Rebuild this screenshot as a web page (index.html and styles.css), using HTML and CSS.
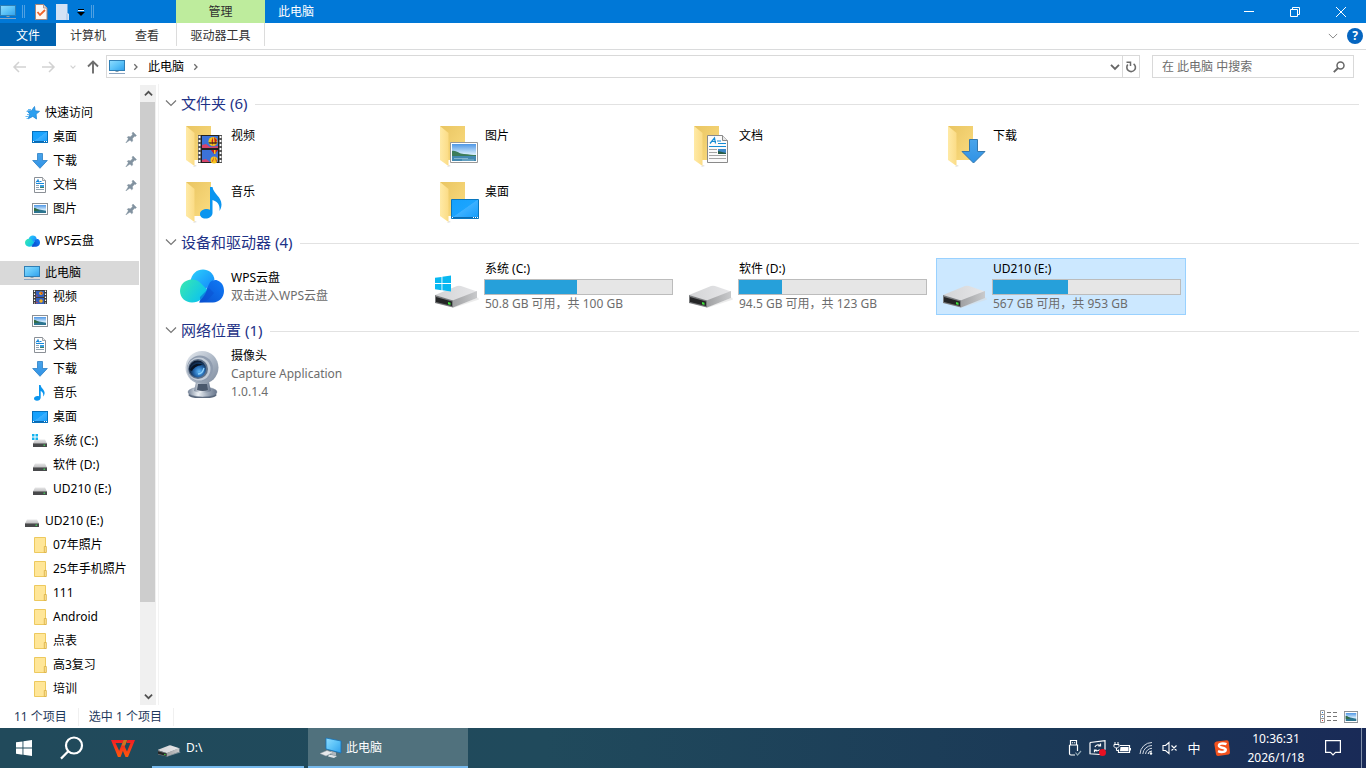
FILE: index.html
```html
<!DOCTYPE html>
<html lang="zh-CN">
<head>
<meta charset="utf-8">
<meta name="viewport" content="width=device-width, initial-scale=1">
<title>此电脑</title>
<link rel="stylesheet" href="styles.css">
</head>
<body>
<svg class="defs" width="0" height="0" aria-hidden="true">
  <defs>
    <linearGradient id="g-screen" x1="0" y1="0" x2="1" y2="1"><stop offset="0" stop-color="#8fdcff"/><stop offset=".5" stop-color="#5cc3f8"/><stop offset="1" stop-color="#2f9fec"/></linearGradient>
    <linearGradient id="g-desk" x1="0" y1="0" x2="1" y2="1"><stop offset="0" stop-color="#14a0fc"/><stop offset=".48" stop-color="#1ba4fe"/><stop offset=".5" stop-color="#3cb0ff"/><stop offset="1" stop-color="#119bfb"/></linearGradient>
    <linearGradient id="g-back" x1="0" y1="0" x2="1" y2="1"><stop offset="0" stop-color="#e9c562"/><stop offset="1" stop-color="#fbdc80"/></linearGradient>
    <linearGradient id="g-flap" x1="0" y1="0" x2="1" y2="0"><stop offset="0" stop-color="#ffeaa6"/><stop offset="1" stop-color="#fbdc86"/></linearGradient>
    <linearGradient id="g-sky" x1="0" y1="0" x2="0" y2="1"><stop offset="0" stop-color="#4f97e6"/><stop offset=".6" stop-color="#d5ecfb"/><stop offset="1" stop-color="#cfe4ee"/></linearGradient>
    <linearGradient id="g-arrow" x1="0" y1="0" x2="0" y2="1"><stop offset="0" stop-color="#49a4ea"/><stop offset="1" stop-color="#2f92e6"/></linearGradient>
    <linearGradient id="g-dtop" x1="0" y1="0" x2="1" y2="0"><stop offset="0" stop-color="#d3d4d6"/><stop offset="1" stop-color="#e6e6e8"/></linearGradient>
    <linearGradient id="g-dside" x1="0" y1="0" x2="1" y2="0"><stop offset="0" stop-color="#9fa0a2"/><stop offset="1" stop-color="#c9cacc"/></linearGradient>
    <linearGradient id="g-c1" x1="0" y1="0" x2="1" y2="1"><stop offset="0" stop-color="#2cd2fb"/><stop offset="1" stop-color="#1180fb"/></linearGradient>
    <linearGradient id="g-c2" x1="0" y1=".2" x2="1" y2=".8"><stop offset="0" stop-color="#35e6b4"/><stop offset="1" stop-color="#08bff5"/></linearGradient>
    <linearGradient id="g-c3" x1="0" y1="1" x2="1" y2="0"><stop offset="0" stop-color="#0a51d0"/><stop offset="1" stop-color="#107cf7"/></linearGradient>
    <linearGradient id="g-metal" x1="0" y1="0" x2="1" y2="1"><stop offset="0" stop-color="#e8ecf1"/><stop offset=".55" stop-color="#aab5c4"/><stop offset="1" stop-color="#7d8a9c"/></linearGradient>
    <radialGradient id="g-lens" cx=".6" cy=".65" r=".6"><stop offset="0" stop-color="#5cb8fa"/><stop offset=".5" stop-color="#2568ae"/><stop offset="1" stop-color="#0c1c34"/></radialGradient>
    <linearGradient id="g-base" x1="0" y1="0" x2="1" y2="0"><stop offset="0" stop-color="#78869a"/><stop offset=".35" stop-color="#edf1f5"/><stop offset=".7" stop-color="#9aa6b6"/><stop offset="1" stop-color="#66748a"/></linearGradient>
    <linearGradient id="g-wps" x1="0" y1="0" x2="0" y2="17" gradientUnits="userSpaceOnUse"><stop offset="0" stop-color="#f31c24"/><stop offset="1" stop-color="#ff5a0a"/></linearGradient>
    <linearGradient id="g-mini" x1="0" y1="0" x2="0" y2="1"><stop offset="0" stop-color="#e7e7e8"/><stop offset="1" stop-color="#bdbdbf"/></linearGradient>
  </defs>

  <symbol id="i-pc" viewBox="0 0 16 16"><rect x=".5" y="1.500" width="15" height="10" fill="url(#g-screen)" stroke="#2f7fb5"/><path d="M6.500 12h3v1h-3z" fill="#8aa0b0"/><path d="M0 14.500h16" stroke="#8ba4c0"/></symbol>
  <symbol id="i-star" viewBox="0 0 16 16"><path d="M10.500 1.500l.7 4.300 4.300.6-3.400 2.700.4 4.900-3.700-2.600-4.600 2.400 1.600-4.800-2.600-3.100 4.300-.2z" fill="#2b9ff0" stroke="#1f86d6" stroke-width=".8"/><path d="M4 4.500h3M2.500 6.500h2M3 9.500h2M1.500 11.500h3M2.500 13.500h2" stroke="#56b3f2" stroke-width=".9"/></symbol>
  <symbol id="i-desk" viewBox="0 0 16 16"><rect x=".5" y="2.500" width="15" height="11" fill="url(#g-desk)" stroke="#0671bd"/><path d="M1 12.500h14" stroke="#0a67b0"/><path d="M1 12.500h1M12 12.500h1M14 12.500h1" stroke="#fff"/></symbol>
  <symbol id="i-down" viewBox="0 0 16 16"><path d="M5.500.5h5v7h4.800L8 15.300.7 7.500h4.800z" fill="url(#g-arrow)" stroke="#2b7fc4" stroke-width=".8"/></symbol>
  <symbol id="i-doc" viewBox="0 0 16 16"><path d="M2.500.5h8l3 3v12h-11z" fill="#fff" stroke="#8b9096"/><path d="M10.500.5v3h3" fill="#eee" stroke="#8b9096" stroke-width=".8"/><path d="M4 5.500L6 2.500l1 3M4.500 4.500h3M8 4.500h1.500M4 6.500h8" stroke="#1687d9" fill="none"/><path d="M4 8.500h3M4 10.500h3M4 12.500h8" stroke="#8ea3b3"/><path d="M8 8h4v3H8z" fill="#3b9fe0"/><path d="M8 10h4v1H8z" fill="#3d7d66"/></symbol>
  <symbol id="i-pic" viewBox="0 0 16 16"><rect x=".5" y="2.500" width="15" height="11" fill="#fff" stroke="#8b9096"/><path d="M2 4h12v8H2z" fill="url(#g-sky)"/><path d="M2 7l4 1.200 8 1.600V12H2z" fill="#2d7590"/><path d="M2 6.800c2 .4 4 2 6 2.600l-6 .6z" fill="#346d43"/></symbol>
  <symbol id="i-film" viewBox="0 0 16 16"><path d="M1 1h14v14H1z" fill="#3c3c3c"/><path d="M4 2h8v6H4zM4 9h8v6H4z" fill="#335fbe"/><circle cx="9" cy="4.300" r="1.800" fill="#f2b31b"/><path d="M8 3.500l2 2 .5-2z" fill="#cc2a1b"/><path d="M4 6l2.500 1L4 7.800M4 12.500l2.500 1L4 14.500z" fill="#b44866"/><circle cx="9" cy="12" r="1.800" fill="#efb224"/><path d="M2.500 1.500v13M13.500 1.500v13" stroke="#fff" stroke-dasharray="1.500 1.500" stroke-width="1.200"/></symbol>
  <symbol id="i-note" viewBox="0 0 16 16"><path d="M7 0h1.600c.2 3 4 4.600 4 7.800 0 1.500-.5 2.700-1.400 3.700.5-3-.6-4.500-2.500-5.500v6.500c0 2-1.700 3.300-3.700 3.300S2 14.900 2 13.600C2 12 3.700 11 5.400 11c.6 0 1.100.1 1.600.3z" fill="#0a95ee"/></symbol>
  <symbol id="i-drive" viewBox="0 0 16 16"><path d="M3 6.500h10L15 10.500H1z" fill="url(#g-mini)"/><path d="M1 10.300h14v3.700H1z" fill="#48494b"/><path d="M1 10.500h14" stroke="#888" stroke-width=".6"/><path d="M11.500 11.600h1.600v1.200h-1.600z" fill="#44df5c"/></symbol>
  <symbol id="i-drivec" viewBox="0 0 16 16"><use href="#i-drive"/><path d="M0 1h2.500v2.500H0zM3.500 1H6v2.500H3.500zM0 4.500h2.500V7H0zM3.500 4.500H6V7H3.500z" fill="#14b3ef"/></symbol>
  <symbol id="i-folder" viewBox="0 0 16 16"><path d="M2.500.5h11v15h-11z" fill="#ffe698" stroke="#edc95e"/><path d="M12.300 9.500h2v6h-2z" fill="#ffe698" stroke="#dcb34a" stroke-width=".9"/></symbol>
  <symbol id="i-cloud" viewBox="0 0 44 34"><path d="M10 13C12 4 17 .5 23 .5c5.500 0 10.500 3.500 11.500 10L22 24z" fill="url(#g-c1)"/><path d="M19 33.500l11-20.300c2-2 5-2.900 7.500-1.800C42 13 44 17 44 22c0 6.500-5 11.500-11 11.500z" fill="url(#g-c3)"/><path d="M12 10.500c4 0 6.500 1.500 9 4l6 6c-3 9-8 13-15 13C5 33.500 0 28.500 0 22s5-11.500 12-11.500z" fill="url(#g-c2)"/><path d="M20 33.500c4 0 6-1 8.500-3.500L34 24l-5-5-9 9z" fill="#0a50d2" opacity=".5"/></symbol>
  <symbol id="i-pin" viewBox="0 0 12 12"><path d="M8 1l3.500 3.500-1 1-1-.2-2 2.200.2 2.500-1 .8L2.200 6.500l.8-1 2.500.2 2-2-.4-1.500zM3.500 7.500l1.500 1.500L.8 12z" fill="#8292a0" stroke="#8292a0" stroke-width=".4"/></symbol>
  <symbol id="i-chev" viewBox="0 0 12 12"><path d="M1 3.500l5 5 5-5" fill="none" stroke="currentColor" stroke-width="1.200"/></symbol>
  <symbol id="i-bold-chev" viewBox="0 0 8 8"><path d="M.8 2.300L4 5.500l3.200-3.200" fill="none" stroke="currentColor" stroke-width="1.500"/></symbol>
  <symbol id="i-crumb" viewBox="0 0 8 8"><path d="M2.300 1.300L5 4 2.300 6.700" fill="none" stroke="#6b6b6b" stroke-width="1.300"/></symbol>
  <symbol id="i-arrow" viewBox="0 0 14 12"><path d="M7 1L2 6l5 5M2 6h12" fill="none" stroke="currentColor" stroke-width="1.500"/></symbol>

  <symbol id="b-folder" viewBox="0 0 48 48"><path d="M15 42l-2 2 4-1z" fill="#ddd"/><path d="M6 3h25v34H14z" fill="url(#g-back)"/><path d="M6 3l8.500 7v33L6 37z" fill="url(#g-flap)"/></symbol>
  <symbol id="b-pc" viewBox="0 0 22 22"><path d="M6 1l15 3v12L6 12z" fill="url(#g-screen)" stroke="#1572b8" stroke-width=".8"/><path d="M11 14l5 1.500v3l-5-1z" fill="#aeb6bd"/><path d="M9 17.500l8 1.500-3 2-6-1.500z" fill="#dfe3e6"/><path d="M0 16.500l7-3 6 2-7 3.500z" fill="#e8eaec" stroke="#9ba2a8" stroke-width=".5"/></symbol>
  <symbol id="b-drive" viewBox="0 0 48 48"><path d="M18 44.500l26-10 1 2-26 8.500z" fill="#d9d9d9" opacity=".5"/><path d="M1 32l22-9q2-.6 4 0l16 5.500L19 38z" fill="url(#g-dtop)"/><path d="M18.500 37.500L43 28v7L19 44.500z" fill="url(#g-dside)"/><path d="M1 32l18 5.500v7L1 40z" fill="#77797b"/><path d="M2 34l16 4.600v4.500L2 39z" fill="#242526"/><path d="M14 39l2.500.7v2.200l-2.500-.6z" fill="#3ee23a"/></symbol>
  <symbol id="b-win" viewBox="0 0 16 16"><path d="M0 2.300L6.500 1.400v6.200H0zM7.400 1.300L16 0v7.600H7.400zM0 8.500h6.500v6.200L0 13.800zM7.400 8.500H16V16l-8.600-1.200z" fill="currentColor"/></symbol>
</svg>

<div class="window">
  <header class="titlebar">
    <div class="quick">
      <svg class="ic16"><use href="#i-pc"/></svg>
      <span class="bar"></span>
      <button class="plain" aria-label="属性"><svg width="13" height="16" viewBox="0 0 13 16"><path d="M.5.500h8l3.500 3.500v11.500H.5z" fill="#fdf8f4" stroke="#a9877a"/><path d="M8.500.5V4H12" fill="#ddd" stroke="#a9877a" stroke-width=".8"/><path d="M2.500 8l2.500 3L10 6" fill="none" stroke="#f0642a" stroke-width="1.800"/></svg></button>
      <button class="plain" aria-label="新建文件夹"><svg width="13" height="16" viewBox="0 0 13 16"><path d="M0 0h11.500v9L13 10v6H0z" fill="#d3e2f5"/><path d="M11 9.500V16" stroke="#9ebfe6"/></svg></button>
      <button class="plain caret" aria-label="自定义快速访问工具栏"><svg width="8" height="8" viewBox="0 0 8 8"><path d="M1 1.500h6" stroke="#000"/><path d="M1 2.500h6" stroke="#dceeff"/><path d="M0 4h8L4 8z" fill="#000"/></svg></button>
      <span class="bar"></span>
    </div>
    <div class="context">管理</div>
    <h1 class="caption">此电脑</h1>
    <div class="winbtns">
      <button aria-label="最小化"><svg width="10" height="10"><path d="M0 4.500h10" stroke="#fff"/></svg></button>
      <button aria-label="还原"><svg width="10" height="10" fill="none" stroke="#fff"><path d="M.5 2.500h7v7h-7zM2.500 2.500v-2h7v7h-2"/></svg></button>
      <button aria-label="关闭"><svg width="10" height="10" stroke="#fff"><path d="M0 0l10 10M10 0L0 10"/></svg></button>
    </div>
  </header>

  <div class="ribbon">
    <button class="file">文件</button>
    <button class="tab-pc">计算机</button>
    <button class="tab-view">查看</button>
    <button class="tab-tools">驱动器工具</button>
    <div class="ribbon-end">
      <button class="plain" aria-label="展开功能区"><svg class="ic10 lightgray"><use href="#i-chev"/></svg></button>
      <button class="help" aria-label="帮助">?</button>
    </div>
  </div>

  <div class="address-row">
    <div class="history">
      <button class="plain off" aria-label="后退"><svg width="14" height="12"><use href="#i-arrow"/></svg></button>
      <button class="plain off forward" aria-label="前进"><svg width="14" height="12"><use href="#i-arrow"/></svg></button>
      <button class="plain off" aria-label="最近浏览的位置"><svg width="6" height="6"><use href="#i-bold-chev"/></svg></button>
      <button class="plain up" aria-label="上移"><svg width="12" height="14" viewBox="0 0 12 14"><path d="M1 6.500L6 1.500l5 5M6 2v11.500" fill="none" stroke="#6e6e6e" stroke-width="1.900"/></svg></button>
    </div>
    <div class="address">
      <svg class="ic16"><use href="#i-pc"/></svg>
      <svg width="8" height="8"><use href="#i-crumb"/></svg>
      <a href="#">此电脑</a>
      <svg width="8" height="8"><use href="#i-crumb"/></svg>
      <button class="plain drop" aria-label="以前的位置"><svg width="10" height="10"><use href="#i-bold-chev"/></svg></button>
      <button class="plain refresh" aria-label="刷新"><svg width="12" height="12" viewBox="0 0 12 12"><path d="M8.600 2.800A4.300 4.300 0 1 1 2.800 3.600" fill="none" stroke="#6b6b6b" stroke-width="1.600"/><path d="M1.500 1.200h4v3.800" fill="none" stroke="#6b6b6b" stroke-width="1.500"/></svg></button>
    </div>
    <label class="search">
      <input type="text" placeholder="在 此电脑 中搜索" aria-label="在 此电脑 中搜索">
      <svg width="12" height="12" viewBox="0 0 12 12"><circle cx="7.500" cy="4.500" r="3.500" fill="none" stroke="#666" stroke-width="1.500"/><path d="M5 7L.8 11.200" stroke="#666" stroke-width="1.900"/></svg>
    </label>
  </div>

  <div class="body">
    <nav class="sidebar">
      <div class="tree">
        <section>
          <a href="#"><svg><use href="#i-star"/></svg>快速访问</a>
          <a class="sub" href="#"><svg><use href="#i-desk"/></svg>桌面<svg class="pin"><use href="#i-pin"/></svg></a>
          <a class="sub" href="#"><svg><use href="#i-down"/></svg>下载<svg class="pin"><use href="#i-pin"/></svg></a>
          <a class="sub" href="#"><svg><use href="#i-doc"/></svg>文档<svg class="pin"><use href="#i-pin"/></svg></a>
          <a class="sub" href="#"><svg><use href="#i-pic"/></svg>图片<svg class="pin"><use href="#i-pin"/></svg></a>
        </section>
        <section>
          <a href="#"><svg><use href="#i-cloud" x="1" width="15" height="16"/></svg>WPS云盘</a>
        </section>
        <section>
          <a class="current" href="#"><svg><use href="#i-pc"/></svg>此电脑</a>
          <a class="sub" href="#"><svg><use href="#i-film"/></svg>视频</a>
          <a class="sub" href="#"><svg><use href="#i-pic"/></svg>图片</a>
          <a class="sub" href="#"><svg><use href="#i-doc"/></svg>文档</a>
          <a class="sub" href="#"><svg><use href="#i-down"/></svg>下载</a>
          <a class="sub" href="#"><svg><use href="#i-note"/></svg>音乐</a>
          <a class="sub" href="#"><svg><use href="#i-desk"/></svg>桌面</a>
          <a class="sub" href="#"><svg><use href="#i-drivec"/></svg>系统 (C:)</a>
          <a class="sub" href="#"><svg><use href="#i-drive"/></svg>软件 (D:)</a>
          <a class="sub" href="#"><svg><use href="#i-drive"/></svg>UD210 (E:)</a>
        </section>
        <section>
          <a href="#"><svg><use href="#i-drive"/></svg>UD210 (E:)</a>
          <a class="sub" href="#"><svg><use href="#i-folder"/></svg>07年照片</a>
          <a class="sub" href="#"><svg><use href="#i-folder"/></svg>25年手机照片</a>
          <a class="sub" href="#"><svg><use href="#i-folder"/></svg>111</a>
          <a class="sub" href="#"><svg><use href="#i-folder"/></svg>Android</a>
          <a class="sub" href="#"><svg><use href="#i-folder"/></svg>点表</a>
          <a class="sub" href="#"><svg><use href="#i-folder"/></svg>高3复习</a>
          <a class="sub" href="#"><svg><use href="#i-folder"/></svg>培训</a>
        </section>
      </div>
      <div class="scroll">
        <button class="plain flip" aria-label="向上滚动"><svg width="9" height="9"><use href="#i-bold-chev"/></svg></button>
        <div class="track"><div class="thumb"></div></div>
        <button class="plain" aria-label="向下滚动"><svg width="9" height="9"><use href="#i-bold-chev"/></svg></button>
      </div>
    </nav>

    <main class="content">
      <section>
        <h2><svg width="12" height="12"><use href="#i-chev"/></svg>文件夹 (6)</h2>
        <div class="tiles folders">
          <a href="#"><svg viewBox="0 0 48 48"><use href="#b-folder"/><path d="M18 12h24v28H18z" fill="#555"/><path d="M21 12h18v28H21z" fill="#222"/><path d="M22 13h16v12H22zM22 27h16v12H22z" fill="#3b72d8"/><path d="M22 22l4-1 4 3 8-1v2H22zM22 37l4-1 4 3h-8z" fill="#d5446b"/><circle cx="33" cy="18.500" r="4.500" fill="#f3c41d"/><path d="M33 14l-1.500 4 1.500 5zM34 14l3 3-2 5z" fill="#c5221f"/><path d="M28.500 19h9l-1 2h-7z" fill="#3a2a18" opacity=".7"/><path d="M31 27h7l-3.500 4.500z" fill="#c5221f"/><path d="M34 27h1.500v4H34z" fill="#f3c41d"/><circle cx="34" cy="37" r="3.500" fill="#f3c41d"/><path d="M34 33.500l-2 5h1zM35 33.500l2 5h-1z" fill="#c5221f"/><path d="M19.500 13v27M40.500 13v27" stroke="#fff" stroke-width="1.800" stroke-dasharray="2 2"/></svg><span>视频</span></a>
          <a href="#"><svg viewBox="0 0 48 48"><use href="#b-folder"/><path d="M16.500 19.500h27v20h-27z" fill="#fff" stroke="#989898"/><path d="M18 21h24v17H18z" fill="url(#g-sky)"/><path d="M18 28c4-1 7 3 12 3 5 .5 9 1 12 1v2H18z" fill="#3c7c59"/><path d="M18 33h24v5H18z" fill="#4389b0"/><path d="M20 35.500h14M28 37h12" stroke="#9fc9de" stroke-width=".7"/></svg><span>图片</span></a>
          <a href="#"><svg viewBox="0 0 48 48"><use href="#b-folder"/><path d="M19.500 12.500h15l5 5v22h-20z" fill="#fbfbfb" stroke="#8a8a8a"/><path d="M34.500 12.500v5h5" fill="#e8e8e8" stroke="#8a8a8a"/><path d="M22 20.500l4.500-5.500 1 5.500M23.500 18.500h4.500M29 18h4M30 20.500h8M21 23.500h17" fill="none" stroke="#158bd4" stroke-width="1.200"/><path d="M21 26.500h8M21 29.500h8M21 32.500h17M21 35.500h17" stroke="#a5a5a5"/><path d="M30 26h8v5h-8z" fill="#3d87c8"/><path d="M30 28l8 2v1h-8z" fill="#285c45"/></svg><span>文档</span></a>
          <a href="#"><svg viewBox="0 0 48 48"><use href="#b-folder"/><path d="M27.500 16.500h8v12H43L31.500 40 20 28.500h7.500z" fill="url(#g-arrow)" stroke="#3578ad"/></svg><span>下载</span></a>
          <a href="#"><svg viewBox="0 0 48 48"><use href="#b-folder"/><path d="M30 8h2.500c1 7 9 9.500 9 17.500 0 2.500-.8 4.500-2 6.500.8-6-2-9.500-7-11v13c0 3.500-3.500 5.500-7 5.500s-5.500-2-5.500-4.500c0-3.500 3.500-5 7-5 1 0 2 .2 3 .7z" fill="#0b95ef"/></svg><span>音乐</span></a>
          <a href="#"><svg viewBox="0 0 48 48"><use href="#b-folder"/><path d="M17.500 20.500h27v19h-27z" fill="url(#g-desk)" stroke="#0876bf"/><path d="M18 38.500h26" stroke="#0b6cb2"/><path d="M18 38.500h1M39 38.500h1M41 38.500h1M43 38.500h1" stroke="#fff"/></svg><span>桌面</span></a>
        </div>
      </section>
      <section class="drives">
        <h2><svg width="12" height="12"><use href="#i-chev"/></svg>设备和驱动器 (4)</h2>
        <div class="tiles">
          <a href="#"><svg viewBox="0 0 48 48"><use href="#i-cloud" y="6" width="44" height="34"/></svg><span>WPS云盘<small>双击进入WPS云盘</small></span></a>
          <a href="#"><svg viewBox="0 0 48 48"><use href="#b-drive"/><use class="cyan" href="#b-win" x="1" y="12" width="16" height="17"/></svg><span>系统 (C:)<i class="meter"><i style="width:49%"></i></i><small>50.8 GB 可用，共 100 GB</small></span></a>
          <a href="#"><svg viewBox="0 0 48 48"><use href="#b-drive"/></svg><span>软件 (D:)<i class="meter"><i style="width:23%"></i></i><small>94.5 GB 可用，共 123 GB</small></span></a>
          <a class="selected" href="#"><svg viewBox="0 0 48 48"><use href="#b-drive"/></svg><span>UD210 (E:)<i class="meter"><i style="width:40%"></i></i><small>567 GB 可用，共 953 GB</small></span></a>
        </div>
      </section>
      <section>
        <h2><svg width="12" height="12"><use href="#i-chev"/></svg>网络位置 (1)</h2>
        <div class="tiles">
          <a href="#"><svg viewBox="0 0 48 48"><ellipse cx="22.500" cy="45" rx="14" ry="3.500" fill="#59677b"/><ellipse cx="22.500" cy="42" rx="14.500" ry="5" fill="url(#g-base)" stroke="#78869a" stroke-width=".5"/><path d="M16 32h13l2 9q-8 4-17 0z" fill="url(#g-base)"/><path d="M18 34h9l1 6q-5 2-11 0z" fill="#4a586c"/><circle cx="22" cy="17.500" r="16.500" fill="url(#g-metal)"/><circle cx="20" cy="18.500" r="13" fill="#8f9caf"/><circle cx="19" cy="19" r="11.500" fill="#c3ccd7"/><circle cx="18" cy="19" r="10" fill="#5d7089"/><circle cx="17.500" cy="19" r="8.500" fill="url(#g-lens)"/><path d="M10 20c2-5 7-8 13-5-4 0-9 2-11 6z" fill="#071222"/><path d="M18 24c3 0 5-2 6-6" stroke="#8dd3ff" stroke-width="1.300" fill="none"/></svg><span>摄像头<small>Capture Application</small><small>1.0.1.4</small></span></a>
        </div>
      </section>
    </main>
  </div>

  <footer class="status">
    <span>11 个项目</span><span>选中 1 个项目</span>
    <div class="views">
      <button class="plain" aria-label="详细信息"><svg width="17" height="14" viewBox="0 0 17 14" fill="none" stroke="#777"><path d="M.5.500h4v12h-4zM.5 4.500h4M.5 8.500h4" stroke="#999"/><path d="M7 2.500h4M13 2.500h4M7 6.500h4M13 6.500h4M7 10.500h4M13 10.500h4"/><path d="M2 2.500h1M2 6.500h1" stroke="#2b7bd0"/><path d="M2 10.500h1" stroke="#c33"/></svg></button>
      <button class="plain" aria-label="大图标"><svg width="14" height="12" viewBox="0 2 16 12" preserveAspectRatio="none"><use href="#i-pic" width="16" height="16"/></svg></button>
    </div>
  </footer>
</div>

<div class="taskbar">
  <button class="tb" aria-label="开始"><svg width="16" height="16"><use href="#b-win"/></svg></button>
  <button class="tb" aria-label="搜索"><svg width="24" height="24" viewBox="0 0 24 24" fill="none" stroke="#fff" stroke-width="2.200"><circle cx="14" cy="9.500" r="8"/><path d="M8.300 15.300L1 22.600"/></svg></button>
  <button class="tb wps" aria-label="WPS Office"><svg width="24" height="17" viewBox="0 0 24 17"><path d="M0 0h13l-1.500 3H4.500l4 8.500L7 17z" fill="url(#g-wps)"/><path d="M12.500 0h3.700L9.500 17H7l-.3-2.500z" fill="url(#g-wps)"/><path d="M14.500 17l-3-7 1.700-4.500 2.800 6L19.500 3h-4l1-3H24l-7 17z" fill="url(#g-wps)"/><path d="M12.700 0h3.500L14 5.500h-3.400z" fill="#c97a20"/></svg></button>
  <button class="task"><svg width="24" height="24" viewBox="2 8 46 40"><use href="#b-drive" width="48" height="48"/></svg>D:\</button>
  <button class="task active"><svg width="22" height="22"><use href="#b-pc"/></svg>此电脑</button>
  <div class="tray">
    <button aria-label="安全删除硬件"><svg width="16" height="18" viewBox="0 0 16 18" fill="none" stroke="#fff" stroke-width="1.200"><path d="M4.500 6V1.500h6V6M3.500 6h8v6M3.500 6v8.500q0 1.500 1.500 1.500h4M6.500 3.200v1M8.500 3.200v1"/><path d="M9.500 13.500l2 2.500 3.500-4" stroke="#8fa7b4"/></svg></button>
    <button aria-label="同步"><svg width="18" height="18" viewBox="0 0 18 18" fill="none" stroke="#fff" stroke-width="1.200"><path d="M1 3.500l15-1.800v9M1 3.500v11.300l10 .7"/><path d="M6 8a3.200 3.200 0 0 1 5-1.500M11.500 4.500v2.300H9.200M10.500 10.500A3 3 0 0 1 6 11M5.500 13.300V11h2.200"/><circle cx="13.500" cy="13.500" r="3.500" fill="#e81123" stroke="none"/></svg></button>
    <button aria-label="电池"><svg width="18" height="14" viewBox="0 0 18 14"><path d="M7 4.500h9.500v7H5.500v-3M17.500 7v2.500" fill="none" stroke="#fff" stroke-width="1.200"/><path d="M7.500 6h8v4.300H7z" fill="#fff"/><path d="M2 1v2M5 1v2M1 3.500h5v2L4.500 7h-2L1 5.500zM3.500 7v2.500h2" fill="none" stroke="#fff"/></svg></button>
    <button aria-label="网络"><svg width="14" height="14" viewBox="0 0 14 14" fill="none" stroke="#d3dae3"><path d="M1 13A12 12 0 0 1 13 1.500M3.800 13A9.200 9.200 0 0 1 13 4.500M6.500 13A6.500 6.500 0 0 1 13 7.300"/><path d="M9 13a4 4 0 0 1 4-3" stroke="#fff"/><circle cx="12" cy="12.500" r="1.200" fill="#fff" stroke="none"/></svg></button>
    <button aria-label="静音"><svg width="16" height="14" viewBox="0 0 16 14" fill="none" stroke="#fff" stroke-width="1.100"><path d="M1 4.500h2.500L7 1.500v11L3.500 9.500H1zM9.500 4.500l5 5M14.500 4.500l-5 5"/></svg></button>
    <button class="ime">中</button>
    <button class="sogou" aria-label="搜狗输入法"><svg width="16" height="16" viewBox="0 0 16 16"><path d="M2.500 1.500L13 .3q1.500 0 1.700 1.500L16 12.500q0 1.700-1.500 2L4 15.900q-1.800 0-2-1.600L.3 4q0-2 2.200-2.500z" fill="#f3511d"/><path d="M12.500 4.200C9 2.800 4.500 3.500 5 6c.5 2.200 6.500 1.200 6.700 3.700.1 2.500-4.700 2.800-7.700 1.500" fill="none" stroke="#fff" stroke-width="2.500"/></svg></button>
  </div>
  <button class="clock"><time>10:36:31</time><time>2026/1/18</time></button>
  <button class="notice" aria-label="操作中心"><svg width="16" height="16" viewBox="0 0 16 16"><path d="M.6.600h14.800v11.800h-4.900L8 15l-2.500-2.600H.6z" fill="none" stroke="#fff" stroke-width="1.200"/></svg></button>
  <button class="show-desktop" aria-label="显示桌面"></button>
</div>
</body>
</html>
```
FILE: styles.css
```css
* {
  box-sizing: border-box;
}

body {
  margin: 0;
  height: 100vh;
  display: flex;
  flex-direction: column;
  overflow: hidden;
  background: #fff;
  color: #000;
  font: 12px/18px "Noto Sans", "Noto Sans CJK SC", sans-serif;
}

.defs {
  position: absolute;
}

button {
  margin: 0;
  padding: 0;
  border: 0;
  background: none;
  color: inherit;
  font: inherit;
  display: flex;
  align-items: center;
  justify-content: center;
}

a {
  color: inherit;
  text-decoration: none;
}

svg {
  flex: none;
  display: block;
}

.ic16 {
  width: 16px;
  height: 16px;
}

.ic10 {
  width: 10px;
  height: 10px;
}

.lightgray {
  color: #8a8a8a;
}

.window {
  flex: 1;
  min-height: 0;
  display: flex;
  flex-direction: column;
}

/* Title bar */
.titlebar {
  flex: none;
  height: 23px;
  display: flex;
  align-items: center;
  background: #0078d7;
  color: #fff;
}

.quick {
  width: 176px;
  display: flex;
  align-items: center;
}

.quick .bar {
  width: 3px;
  height: 13px;
  margin-left: 6px;
  border: solid #4fa0e2;
  border-width: 0 1px;
}

.quick button {
  margin-left: 8px;
}

.quick .bar + button {
  margin-left: 10px;
}

.context {
  width: 89px;
  height: 23px;
  line-height: 23px;
  text-align: center;
  background: #beec9d;
  color: #303030;
}

.caption {
  margin: 0;
  padding-left: 13px;
  font-size: 12px;
  font-weight: 400;
}

.winbtns {
  margin-left: auto;
  padding-right: 2px;
  display: flex;
}

.winbtns button {
  width: 46px;
  height: 22px;
}

/* Ribbon tabs */
.ribbon {
  flex: none;
  height: 27px;
  display: flex;
  align-items: flex-start;
  border-bottom: 1px solid #dadbdc;
  color: #333;
}

.ribbon > button {
  height: 23px;
  padding-top: 2px;
}

.ribbon .file {
  width: 56px;
  background: #0063b1;
  color: #fff;
}

.tab-pc {
  width: 64px;
}

.tab-view {
  width: 54px;
}

.ribbon .tab-tools {
  width: 89px;
  margin-left: 2px;
  border: solid #dcdcdc;
  border-width: 0 1px;
}

.ribbon-end {
  height: 26px;
  margin-left: auto;
  padding-right: 3px;
  display: flex;
  align-items: center;
  gap: 9px;
}

.help {
  width: 16px;
  height: 16px;
  border-radius: 8px;
  background: #0565c0;
  color: #fff;
  font-weight: 700;
  line-height: 16px;
}

/* Address row */
.address-row {
  flex: none;
  height: 34px;
  padding: 5px 12px 6px 12px;
  display: flex;
}

.history {
  width: 94px;
  display: flex;
  align-items: center;
  gap: 14px;
}

.off {
  color: #d2d2d2;
}

.forward svg {
  transform: scaleX(-1);
}

.forward {
  margin-left: 2px;
}

.history .up {
  margin-left: -3px;
}

.address {
  flex: 1;
  display: flex;
  align-items: center;
  border: 1px solid #d9d9d9;
  padding-left: 2px;
  gap: 7px;
}

.address a {
  padding: 0 1px;
}

.drop {
  margin-left: auto;
  color: #666;
}

.refresh {
  width: 17px;
  height: 100%;
  margin-left: -5px;
  border-left: 1px solid #d9d9d9;
}

.search {
  width: 202px;
  margin-left: 12px;
  padding-right: 8px;
  display: flex;
  align-items: center;
  border: 1px solid #d9d9d9;
}

.search input {
  flex: 1;
  min-width: 0;
  padding: 0 0 0 9px;
  border: 0;
  outline: 0;
  font: inherit;
}

.search input::placeholder {
  color: #6d6d6d;
}

/* Navigation pane */
.body {
  flex: 1;
  min-height: 0;
  display: flex;
}

.sidebar {
  flex: none;
  width: 159px;
  padding-top: 1px;
  display: flex;
  border-right: 1px solid #f3f3f3;
}

.tree {
  width: 140px;
  padding: 16px 1px 0 0;
  overflow: hidden;
}

.tree section {
  margin-bottom: 8px;
}

.tree a {
  height: 24px;
  padding-left: 24px;
  display: flex;
  align-items: center;
  gap: 5px;
}

.tree .sub {
  padding-left: 32px;
}

.tree .current {
  background: #d9d9d9;
}

.tree svg {
  width: 16px;
  height: 16px;
}

.tree .pin {
  width: 12px;
  height: 12px;
  margin-left: auto;
  margin-right: 2px;
}

.scroll {
  width: 16px;
  display: flex;
  flex-direction: column;
  background: #f0f0f0;
  color: #505050;
}

.scroll button {
  height: 17px;
}

.flip {
  transform: scaleY(-1);
}

.track {
  flex: 1;
}

.thumb {
  width: 15px;
  height: 85.4%;
  background: #cdcdcd;
}

/* Content */
.content {
  flex: 1;
  min-width: 0;
  padding: 8px 7px 0 6px;
  overflow: hidden;
}

.content h2 {
  height: 24px;
  margin: 0 0 3px;
  padding-bottom: 2px;
  display: flex;
  align-items: center;
  color: #1e3287;
  font-size: 15px;
  font-weight: 400;
  line-height: 22px;
}

.content h2 svg {
  margin-right: 4px;
  color: #777;
}

.content h2::after {
  content: "";
  flex: 1;
  height: 1px;
  margin: 2px 0 0 8px;
  background: #e2e2e2;
}

.tiles {
  padding-left: 9px;
  display: grid;
  grid-template-columns: repeat(auto-fill, 250px);
  column-gap: 4px;
}

.tiles a {
  height: 56px;
  padding: 0 4px 0 5px;
  display: flex;
  align-items: center;
  gap: 2px;
  border: 1px solid transparent;
}

.tiles svg {
  width: 48px;
  height: 48px;
}

.tiles span {
  flex: 1;
  padding-left: 1px;
}

.folders span {
  align-self: flex-start;
  padding-top: 7px;
}

.tiles small {
  display: block;
  color: #6d6d6d;
  font-size: 12px;
}

.drives {
  padding-bottom: 4px;
}

.drives a {
  height: 57px;
}

.tiles .selected {
  background: #cce8ff;
  border-color: #99d1ff;
}

.meter {
  display: block;
  height: 16px;
  margin: 1px 0 0 -1px;
  border: 1px solid #bcbcbc;
  background: #e6e6e6;
}

.meter i {
  display: block;
  height: 100%;
  background: #26a0da;
}

.cyan {
  color: #08b8f1;
}

/* Status bar */
.status {
  flex: none;
  height: 23px;
  padding: 0 8px 0 14px;
  display: flex;
  align-items: center;
  color: #1e395b;
}

.status span {
  margin-right: 10px;
  padding-right: 11px;
  border-right: 1px solid #f0f0f0;
}

.views {
  margin-left: auto;
  display: flex;
  align-items: center;
  gap: 7px;
}

/* Taskbar */
.taskbar {
  flex: none;
  height: 40px;
  display: flex;
  background: linear-gradient(90deg, #214a5b 0%, #204a5c 40%, #1b3a57 75%, #192a57 100%);
  color: #fff;
}

.tb {
  width: 48px;
}

.wps {
  width: 56px;
  padding-right: 2px;
}

.task {
  width: 152px;
  padding: 0 6px;
  justify-content: flex-start;
  gap: 4px;
  box-shadow: inset 0 -2px #76b9ed;
}

.active {
  width: 160px;
  margin-left: 4px;
  padding-left: 12px;
  background: #50717d;
}

.tray {
  margin-left: auto;
  padding-right: 4px;
  display: flex;
}

.tray button {
  width: 24px;
}

.tray .sogou {
  width: 32px;
}

.ime {
  font-size: 13px;
}

.clock {
  width: 68px;
  flex-direction: column;
  line-height: 19px;
}

.notice {
  width: 46px;
}

.show-desktop {
  width: 5px;
  margin-left: 5px;
  border-left: 1px solid #8190a9;
}
```
